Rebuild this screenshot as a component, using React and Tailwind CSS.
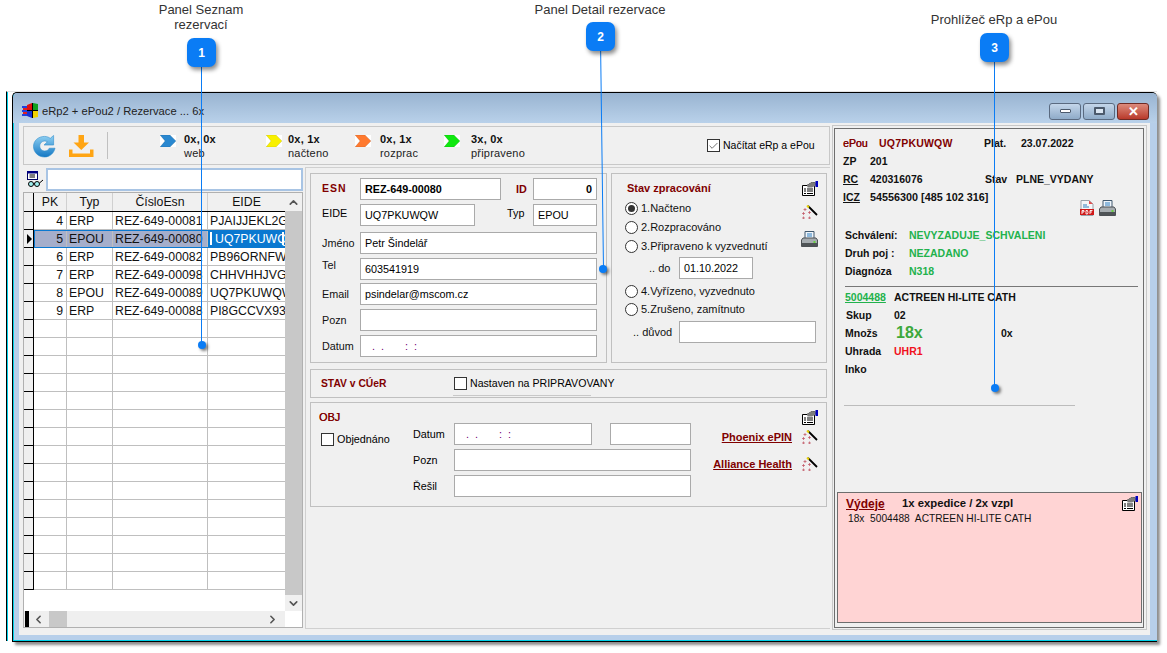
import React from 'react';
import { Check, ChevronUp, ChevronDown, ChevronLeft, ChevronRight } from 'lucide-react';

const rows = [
  { pk: 4, typ: 'ERP', esn: 'REZ-649-00081', eide: 'PJAIJJEKL2G' },
  { pk: 5, typ: 'EPOU', esn: 'REZ-649-00080', eide: 'UQ7PKUWQW', selected: true },
  { pk: 6, typ: 'ERP', esn: 'REZ-649-00082', eide: 'PB96ORNFW' },
  { pk: 7, typ: 'ERP', esn: 'REZ-649-00098', eide: 'CHHVHHJVGI' },
  { pk: 8, typ: 'EPOU', esn: 'REZ-649-00089', eide: 'UQ7PKUWQW' },
  { pk: 9, typ: 'ERP', esn: 'REZ-649-00088', eide: 'PI8GCCVX93I' },
];
const emptyRows = Array.from({ length: 15 }, (_, i) => i);

const Chevron = ({ color }) => (
  <svg width="16" height="12" viewBox="0 0 16 12" className="shrink-0 bg-white">
    <path d="M0 0H10L16 6L10 12H0L5 6Z" fill={color} stroke="#00000030" strokeWidth="0.5" />
  </svg>
);

const FormIcon = () => (
  <svg width="17" height="15" viewBox="0 0 17 15" className="shrink-0">
    <path d="M1.500 4.500H6L11 1.500H13.500V14.500H1.500Z" fill="#fff" stroke="#000" />
    <path d="M6 4L11 1L15 1.500V4.500L11 6.500H6.500Z" fill="#7c7c7c" />
    <rect x="14.500" y="0" width="2.500" height="6" fill="#0000c0" />
    <path d="M3 8H5M6 8H12M3 10H5M6 10H12M3 12.500H5M6 12.500H12" stroke="#000" strokeWidth="1" />
  </svg>
);

const WandIcon = () => (
  <svg width="17" height="14" viewBox="0 0 17 14" className="shrink-0">
    <path d="M7 1L16 10" stroke="#000" strokeWidth="1.800" />
    <path d="M6 0.500L8 2.500" stroke="#e8d000" strokeWidth="1.800" />
    <path d="M4 3V6M2.500 4.500H5.500M1 8.500H4M2.500 7V10M7 7.500H10M8.500 6V9M1 13H4M2.500 11.500V14M7 13H10M8.500 11.500V14" stroke="#c05060" strokeWidth="0.700" />
  </svg>
);

const PrinterIcon = () => (
  <svg width="17" height="16" viewBox="0 0 17 16" className="shrink-0">
    <path d="M4 .5H13V8H4Z" fill="#eef4fa" stroke="#40586e" />
    <path d="M6 3H11M6 5H11" stroke="#2f7fc0" />
    <path d="M2 7H15L16.500 9V15.500H.5V9Z" fill="#a6acb0" stroke="#4c5054" />
    <rect x="1" y="12" width="15" height="3" fill="#4e5356" />
    <rect x="12.500" y="10" width="2" height="2" fill="#66d040" />
  </svg>
);

const PdfIcon = () => (
  <svg width="14" height="16" viewBox="0 0 14 16" className="shrink-0">
    <path d="M1 .5H9L13 4V15.500H1Z" fill="#f4f6f8" stroke="#9aa2aa" />
    <path d="M9 .5L13 4H9Z" fill="#e05050" />
    <path d="M3 5H7M3 7H9" stroke="#3080c0" />
    <rect x="0" y="9" width="14" height="6" fill="#d01818" />
    <path d="M2 14V10.500H4V12H2M6 10.500V14H7.500L8 12.500L7.500 10.500ZM10 14V10.500H12.500M10 12H12" stroke="#fff" strokeWidth="0.900" fill="none" />
  </svg>
);

const RefreshIcon = () => (
  <svg width="23" height="24" viewBox="0 0 24 24" className="shrink-0">
    <defs>
      <linearGradient id="refreshFill" x1="0" y1="0" x2="0" y2="1">
        <stop offset="0" stopColor="#8fd0f2" />
        <stop offset="1" stopColor="#1478c4" />
      </linearGradient>
    </defs>
    <path d="M12 2C14.500 2 16.500 2.800 18 4L21.500 1V11H11.500L15 7.600C14 7 13.200 6.800 12.300 6.800C9.300 6.800 7 9 7 12C7 15 9.300 17.200 12.300 17.200C14.500 17.200 16.200 16 17 14.300H23C21.800 19.500 17.500 23.500 12 23.500C5.500 23.500 0.500 18.500 0.500 12.500C0.500 6.500 5.500 2 12 2Z" fill="url(#refreshFill)" stroke="#2c8ccc" strokeWidth="0.600" />
  </svg>
);

const DownloadIcon = () => (
  <svg width="25" height="22" viewBox="0 0 25 22" className="shrink-0">
    <path d="M9.500 0H15V7.500H20L12.250 15L4.500 7.500H9.500Z" fill="#ffa514" />
    <path d="M0 14.500H3.500V18.500H21V14.500H24.500V22H0Z" fill="#ffa514" />
  </svg>
);

const SearchIcon = () => (
  <svg width="17" height="17" viewBox="0 0 17 17" className="shrink-0">
    <rect x="0.500" y="0.500" width="10" height="8" fill="#fff" stroke="#000060" />
    <rect x="0" y="0" width="11" height="2.500" fill="#000080" />
    <path d="M2.500 4H8M2.500 6H8" stroke="#000" />
    <circle cx="4" cy="13" r="2.500" fill="#a0f0f0" stroke="#000" />
    <circle cx="10" cy="13" r="2.500" fill="#a0f0f0" stroke="#000" />
    <path d="M6.500 12.500H7.500M12.500 12L16 9" stroke="#000" />
  </svg>
);

const AppIcon = () => (
  <svg width="16" height="15" viewBox="0 0 16 15" className="shrink-0">
    <path d="M0 3H5V5H0ZM0 7H5V9H0ZM0 11H5V13H0Z" fill="#2040e0" />
    <path d="M1 5H5V7H1ZM1 9H5V11H1Z" fill="#e02020" />
    <path d="M5 2L10 0V7H5Z" fill="#e01010" />
    <path d="M11 0L16 1V7H11Z" fill="#10a020" />
    <path d="M5 8H10V15L5 13Z" fill="#1830d0" />
    <path d="M11 8H16V14L11 15Z" fill="#f0d000" />
    <path d="M10 0H11V15H10ZM5 7H16V8H5Z" fill="#000" />
  </svg>
);

const Box = ({ className = '', children }) => (
  <div className={`flex h-[22px] shrink-0 items-center border border-[#aaaaaa] bg-white pl-[4px] text-[10.800px] text-black ${className}`}>
    {children}
  </div>
);

const DateMask = () => (
  <span className="pl-[7px] text-[#700070]">.&nbsp;&nbsp;.&nbsp;&nbsp;&nbsp;&nbsp;&nbsp;&nbsp;&nbsp;:&nbsp;&nbsp;:</span>
);

const CheckBox = ({ checked }) => (
  <span className="flex h-[13px] w-[13px] shrink-0 items-center justify-center border border-[#333] bg-white">
    {checked && <Check size={12} strokeWidth={1.5} color="#333" />}
  </span>
);

const Radio = ({ checked, label }) => (
  <div className="flex h-[18px] items-center">
    <span className="flex h-[13px] w-[13px] shrink-0 items-center justify-center rounded-full border border-[#333] bg-white">
      {checked && <span className="h-[7px] w-[7px] rounded-full bg-[#333]" />}
    </span>
    <span className="ml-[3px] whitespace-nowrap">{label}</span>
  </div>
);

const FormRow = ({ label, value, mask, className = '', labelClass = '' }) => (
  <div className={`flex items-center ${className}`}>
    <span className={`w-[38px] shrink-0 text-[#111] ${labelClass}`}>{label}</span>
    <Box className="w-[237px]">{mask ? <DateMask /> : value}</Box>
  </div>
);

const StatusItem = ({ color, top, bottom, className = '', gap = 'gap-[8px]' }) => (
  <div className={`flex shrink-0 items-start ${gap} ${className}`}>
    <div className="pt-[3px]">
      <Chevron color={color} />
    </div>
    <div className="flex flex-col text-[11px] leading-[14px] tracking-[0.2px]">
      <b className="text-[#111]">{top}</b>
      <span className="text-[#222]">{bottom}</span>
    </div>
  </div>
);

const Toolbar = () => (
  <div className="flex h-[39px] items-center border border-[#c8c8c8] pl-[9px]">
    <RefreshIcon />
    <div className="ml-[13px]">
      <DownloadIcon />
    </div>
    <div className="ml-[13px] h-[27px] w-px bg-[#c0c0c0]" />
    <StatusItem color="#2a88d0" top="0x, 0x" bottom="web" className="ml-[52px] w-[106px]" />
    <StatusItem color="#f8f000" top="0x, 1x" bottom="načteno" className="w-[89px]" gap="gap-[6px]" />
    <StatusItem color="#ff7a30" top="0x, 1x" bottom="rozprac" className="w-[89px]" gap="gap-[9px]" />
    <StatusItem color="#10e810" top="3x, 0x" bottom="připraveno" className="w-[263px]" gap="gap-[11px]" />
    <div className="flex items-center gap-[3px] text-[10.500px]">
      <CheckBox checked />
      <span className="whitespace-nowrap">Načítat eRp a ePou</span>
    </div>
  </div>
);

const GridRow = ({ pk, typ, esn, eide, selected }) => (
  <div className="flex h-[18px] w-[261px] shrink-0">
    <div className="flex w-[10px] shrink-0 items-center border-r border-b border-black bg-[#efefef]">
      {selected && <span className="ml-[3px] h-0 w-0 border-y-[5px] border-l-[5px] border-y-transparent border-l-black" />}
    </div>
    <div className={`flex min-w-0 flex-1 border-b border-[#bfbfbf] ${selected ? 'outline outline-1 -outline-offset-1 outline-[#0a78d0]' : ''}`}>
      <div className={`w-[33px] shrink-0 overflow-hidden border-r border-[#bfbfbf] pr-[3px] text-right leading-[19px] ${selected ? 'bg-[#a5aecb]' : ''}`}>{pk}</div>
      <div className={`w-[46px] shrink-0 overflow-hidden border-r border-[#bfbfbf] pl-[2px] leading-[19px] ${selected ? 'bg-[#a5aecb]' : ''}`}>{typ}</div>
      <div className={`w-[95px] shrink-0 overflow-hidden border-r border-[#bfbfbf] pl-[2px] leading-[19px] whitespace-nowrap ${selected ? 'bg-[#a5aecb]' : ''}`}>{esn}</div>
      <div className={`relative min-w-0 flex-1 overflow-hidden pl-[2px] leading-[19px] whitespace-nowrap ${selected ? 'bg-[#0a78d0] pl-[7px] text-white' : ''}`}>
        {selected && <span className="absolute top-[2px] left-[2px] h-[13px] w-[2px] bg-white" />}
        {eide}
        {selected && <span className="absolute top-[2px] right-[1px] h-[13px] w-[2px] bg-white" />}
      </div>
    </div>
  </div>
);

const Grid = () => (
  <div className="flex h-[436px] flex-col overflow-hidden border border-[#b0b0b0] bg-white text-[12.300px] text-[#111]">
    <div className="flex min-h-0 flex-1">
      <div className="flex w-[261px] shrink-0 flex-col overflow-hidden">
        <div className="flex h-[19px] w-[261px] shrink-0 border-b border-black bg-[#f0f0f0] text-center leading-[19px]">
          <div className="w-[10px] shrink-0 border-r border-black" />
          <div className="w-[33px] shrink-0 border-r border-[#d0d0d0]">PK</div>
          <div className="w-[46px] shrink-0 border-r border-[#d0d0d0]">Typ</div>
          <div className="w-[95px] shrink-0 border-r border-[#d0d0d0]">ČísloEsn</div>
          <div className="flex-1">EIDE</div>
        </div>
        {rows.map((r) => <GridRow key={r.pk} {...r} />)}
        {emptyRows.map((i) => <GridRow key={i} />)}
      </div>
      <div className="flex w-[17px] shrink-0 flex-col bg-[#f0f0f0]">
        <div className="flex h-[18px] items-center justify-center">
          <ChevronUp size={13} strokeWidth={3} color="#555" />
        </div>
        <div className="flex-1 bg-[#c8c8c8]" />
        <div className="flex h-[16px] items-center justify-center">
          <ChevronDown size={13} strokeWidth={3} color="#555" />
        </div>
      </div>
    </div>
    <div className="flex h-[16px] w-[261px] shrink-0 items-center bg-[#efefef] pl-[1px]">
      <span className="h-full w-[4px] bg-black" />
      <ChevronLeft size={13} strokeWidth={3} color="#555" className="ml-[3px]" />
      <span className="ml-[4px] h-full w-[18px] bg-[#c8c8c8]" />
      <span className="flex-1" />
      <ChevronRight size={13} strokeWidth={3} color="#555" className="mr-[6px]" />
    </div>
  </div>
);

const DetailPanel = () => (
  <div className="flex h-[190px] w-[297px] shrink-0 flex-col border border-[#c0c0c0] pt-[4px] pl-[11px] text-[10.800px]">
    <div className="flex items-center">
      <b className="w-[38px] text-[10.500px] tracking-[1px] text-[#800000]">ESN</b>
      <Box className="w-[141px] font-bold">REZ-649-00080</Box>
      <b className="ml-[15px] w-[17px] text-[#800000]">ID</b>
      <Box className="w-[64px] justify-end pr-[4px] font-bold">0</Box>
    </div>
    <div className="mt-[4px] flex items-center">
      <span className="mb-[3px] w-[38px]">EIDE</span>
      <Box className="w-[115px]">UQ7PKUWQW</Box>
      <span className="mb-[3px] ml-[32px] w-[26px]">Typ</span>
      <Box className="w-[64px]">EPOU</Box>
    </div>
    <FormRow label="Jméno" value="Petr Šindelář" className="mt-[6px]" />
    <FormRow label="Tel" value="603541919" className="mt-[3px]" labelClass="mb-[7px]" />
    <FormRow label="Email" value="psindelar@mscom.cz" className="mt-[3px]" />
    <FormRow label="Pozn" className="mt-[4px]" />
    <FormRow label="Datum" mask className="mt-[4px]" />
  </div>
);

const StatePanel = () => (
  <div className="flex h-[190px] w-[216px] shrink-0 border border-[#c0c0c0] pl-[13px] text-[11px] text-[#111]">
    <div className="w-[174px] shrink-0 pt-[7px]">
      <b className="block pl-[2px] leading-[14px] text-[#800000]">Stav zpracování</b>
      <div className="mt-[4px] flex flex-col gap-px">
        <Radio checked label="1.Načteno" />
        <Radio label="2.Rozpracováno" />
        <Radio label="3.Připraveno k vyzvednutí" />
      </div>
      <div className="mt-[2px] flex items-center">
        <span className="w-[54px] shrink-0 pl-[24px]">.. do</span>
        <Box className="w-[74px]">01.10.2022</Box>
      </div>
      <div className="mt-[3px] flex flex-col">
        <Radio label="4.Vyřízeno, vyzvednuto" />
        <Radio label="5.Zrušeno, zamítnuto" />
      </div>
      <div className="mt-[3px] flex items-center">
        <span className="w-[54px] shrink-0 pl-[8px] whitespace-nowrap">.. důvod</span>
        <Box className="w-[137px]" />
      </div>
    </div>
    <div className="flex flex-col gap-[9px] pt-[7px] pl-[2px]">
      <FormIcon />
      <WandIcon />
      <div className="mt-[3px]">
        <PrinterIcon />
      </div>
    </div>
  </div>
);

const CuerPanel = () => (
  <div className="mt-[6px] flex h-[29px] items-center border border-[#c0c0c0] pl-[10px] text-[10.600px]">
    <b className="w-[133px] text-[10.300px] text-[#800000]">STAV v CÚeR</b>
    <CheckBox />
    <span className="ml-[3px] whitespace-nowrap">Nastaven na PRIPRAVOVANY</span>
  </div>
);

const ObjPanel = () => (
  <div className="relative mt-[4px] flex h-[105px] border border-[#c0c0c0] pl-[8px] text-[10.800px]">
    <span className="absolute top-[-8px] left-[142px] h-px w-[138px] bg-[#c8c8c8]" />
    <div className="w-[94px] shrink-0 pt-[7px]">
      <b className="block font-normal leading-[14px] text-[#800000] [text-shadow:0.3px_0_0_#800000]">OBJ</b>
      <div className="mt-[7px] ml-[2px] flex items-center gap-[3px]">
        <CheckBox />
        <span>Objednáno</span>
      </div>
    </div>
    <div className="w-[278px] shrink-0 pt-[20px]">
      <div className="flex items-center">
        <span className="w-[41px]">Datum</span>
        <Box className="w-[138px]"><DateMask /></Box>
        <Box className="ml-[18px] w-[81px]" />
      </div>
      <div className="mt-[4px] flex items-center">
        <span className="w-[41px]">Pozn</span>
        <Box className="w-[237px]" />
      </div>
      <div className="mt-[4px] flex items-center">
        <span className="w-[41px]">Řešil</span>
        <Box className="w-[237px]" />
      </div>
    </div>
    <div className="flex flex-1 flex-col items-end pt-[7px] pr-[8px] text-[11px]">
      <FormIcon />
      <div className="mt-[4px] flex items-center gap-[9px] font-bold text-[#800000] underline">
        Phoenix ePIN <WandIcon />
      </div>
      <div className="mt-[10px] flex items-center gap-[9px] font-bold text-[#800000] underline">
        Alliance Health <WandIcon />
      </div>
    </div>
  </div>
);

const InfoRow = ({ label, value, className = '', labelClass = 'w-[27px]', valueClass = '' }) => (
  <div className={`flex h-[18px] items-center ${className}`}>
    <span className={`shrink-0 ${labelClass}`}>{label}</span>
    <span className={`whitespace-nowrap ${valueClass}`}>{value}</span>
  </div>
);

const ViewerPanel = () => (
  <div className="flex h-full flex-col border border-[#6e6e6e] pl-[8px] text-[10.500px] leading-none font-bold text-[#111]">
    <div className="mt-[5px] flex h-[18px] items-center">
      <span className="w-[36px] font-normal text-[#800000] [text-shadow:0.3px_0_0_#800000]">ePou</span>
      <span className="w-[105px] tracking-[0.2px] text-[#800000]">UQ7PKUWQW</span>
      <span className="w-[37px]">Plat.</span>
      <span>23.07.2022</span>
    </div>
    <InfoRow label="ZP" value="201" />
    <div className="flex h-[18px] items-center">
      <span className="w-[27px] underline">RC</span>
      <span className="w-[115px]">420316076</span>
      <span className="w-[31px]">Stav</span>
      <span>PLNE_VYDANY</span>
    </div>
    <div className="flex h-[18px] items-center">
      <span className="w-[27px] underline">ICZ</span>
      <span className="text-[10.800px]">54556300 [485 102 316]</span>
    </div>
    <div className="mt-[-6px] flex h-[16px] items-center justify-end gap-[5px] pr-[27px]">
      <PdfIcon />
      <PrinterIcon />
    </div>
    <div className="mt-[10px] pl-[2px]">
      <InfoRow label="Schválení:" value="NEVYZADUJE_SCHVALENI" labelClass="w-[64px]" valueClass="text-[#22b24c]" />
      <InfoRow label="Druh poj :" value="NEZADANO" labelClass="w-[64px]" valueClass="text-[#22b24c]" />
      <InfoRow label="Diagnóza" value="N318" labelClass="w-[64px]" valueClass="text-[#22b24c]" />
    </div>
    <div className="mt-[6px] mr-[5px] ml-[2px] h-px bg-[#777]" />
    <div className="mt-px flex h-[18px] items-center pl-[2px]">
      <span className="w-[49px] text-[#22b24c] underline">5004488</span>
      <span>ACTREEN HI-LITE CATH</span>
    </div>
    <div className="pl-[2px]">
      <InfoRow label="Skup" value="02" labelClass="w-[49px] pl-px" />
      <div className="flex h-[18px] items-center">
        <span className="w-[51px]">Množs</span>
        <span className="w-[105px] text-[16px] text-[#3ca83c]">18x</span>
        <span>0x</span>
      </div>
      <InfoRow label="Uhrada" value="UHR1" labelClass="w-[49px]" valueClass="text-[#f01020]" />
      <InfoRow label="Inko" labelClass="w-[49px]" />
    </div>
    <div className="mt-[27px] ml-px h-px w-[231px] bg-[#bcbcbc]" />
    <div className="flex-1" />
    <div className="mb-[4px] ml-[-6px] flex h-[131px] w-[305px] flex-col border border-[#6e6e6e] bg-[#ffd4d4] pt-[3px] pr-[3px] pl-[8px] text-[11px]">
      <div className="flex items-center">
        <span className="w-[56px] text-[12px] text-[#800000] underline">Výdeje</span>
        <span className="text-[11.300px]">1x expedice / 2x vzpl</span>
        <span className="flex-1" />
        <FormIcon />
      </div>
      <div className="mt-[3px] pl-[2px] text-[10.200px] font-normal whitespace-pre">18x  5004488  ACTREEN HI-LITE CATH</div>
    </div>
  </div>
);

const Badge = ({ n, className }) => (
  <div className={`absolute flex h-[29px] w-[29px] items-center justify-center rounded-[7px] bg-[#0a7cf5] text-[12px] font-bold text-white shadow-[2px_3px_4px_rgba(0,0,0,0.45)] ${className}`}>
    {n}
  </div>
);

const Dot = ({ className }) => (
  <span className={`absolute h-[8px] w-[8px] rounded-full bg-[#0a7cf5] shadow-[2px_2px_3px_rgba(0,0,0,0.5)] ${className}`} />
);

export default function App() {
  return (
    <div className="relative h-[653px] w-[1167px] overflow-hidden bg-white font-['Liberation_Sans',sans-serif]">
      <div className="mt-[89px] ml-[6px] h-[553px] w-[1151px] pt-[2px]">
        <div className="h-[550px] border-t border-l border-t-[#e4e4e4] border-l-black pl-[5px] shadow-[inset_1px_0_0_#00d0e8]">
          <div className="flex h-[550px] flex-col rounded-t-[5px] border-t border-b border-l border-black bg-[#b7cfea] shadow-[inset_1px_-1px_0_#00d0e8,3px_3px_3px_rgba(0,0,0,0.45)]">
            <div className="flex h-[30px] shrink-0 items-center justify-between rounded-t-[5px] bg-gradient-to-b from-[#99b4d1] to-[#b9d1ea] pt-[6px] pr-[8px] pl-[9px] text-[11.200px] text-[#222]">
              <div className="flex items-center gap-[4px]">
                <AppIcon />
                <span>eRp2 + ePou2 / Rezervace ... 6x</span>
              </div>
              <div className="flex items-center gap-[2px]">
                <div className="flex h-[17px] w-[32px] items-center justify-center rounded-[3px] border border-[#5a6a80] bg-gradient-to-b from-[#c4d6ea] to-[#8fabc8]">
                  <span className="h-[4px] w-[11px] rounded-[1px] border border-[#4c5a6c] bg-white" />
                </div>
                <div className="flex h-[17px] w-[32px] items-center justify-center rounded-[3px] border border-[#5a6a80] bg-gradient-to-b from-[#c4d6ea] to-[#8fabc8]">
                  <span className="h-[8px] w-[11px] rounded-[1px] border-2 border-[#4c5a6c] bg-[#dbe6f2]" />
                </div>
                <div className="flex h-[17px] w-[32px] items-center justify-center rounded-[3px] border border-[#6e2a24] bg-gradient-to-b from-[#dc8a7c] to-[#b8382a] text-[13px] leading-none font-bold text-white">
                  ✕
                </div>
              </div>
            </div>
            <div className="mr-[7px] mb-[6px] ml-[6px] flex min-h-0 flex-1 bg-[#f0f0f0] pt-[2px] pl-[4px]">
              <div className="flex w-[807px] shrink-0 flex-col pt-px">
                <Toolbar />
                <div className="mt-[2px] flex min-h-0 flex-1 gap-[2px]">
                  <div className="flex w-[280px] shrink-0 flex-col">
                    <div className="flex h-[25px] items-center gap-[2px] pl-[4px]">
                      <SearchIcon />
                      <div className="h-[23px] flex-1 border-2 border-[#a8c4e4] bg-white" />
                    </div>
                    <Grid />
                  </div>
                  <div className="flex h-[462px] flex-1 flex-col border border-r-0 border-[#d0d0d0] pt-[5px] pl-[4px]">
                    <div className="flex gap-[4px]">
                      <DetailPanel />
                      <StatePanel />
                    </div>
                    <div className="w-[517px]">
                      <CuerPanel />
                      <ObjPanel />
                    </div>
                  </div>
                </div>
              </div>
              <div className="ml-[2px] h-[505px] w-[315px] shrink-0 border border-[#c8c8c8] pt-[2px] pr-[2px] pb-px pl-px">
                <ViewerPanel />
              </div>
            </div>
          </div>
        </div>
      </div>

      {/* popisky nad screenshotem */}
      <div className="absolute top-[2px] left-[141px] w-[120px] text-center text-[13px] leading-[15px] text-[#333]">
        Panel Seznam<br />rezervací
      </div>
      <div className="absolute top-[2px] left-[500px] w-[200px] text-center text-[13px] leading-[15px] text-[#333]">
        Panel Detail rezervace
      </div>
      <div className="absolute top-[12px] left-[894px] w-[200px] text-center text-[13px] leading-[15px] text-[#333]">
        Prohlížeč eRp a ePou
      </div>
      <svg width="1167" height="653" viewBox="0 0 1167 653" className="pointer-events-none absolute top-0 left-0">
        <path d="M201.500 60V345M600.500 40L603.500 269M994.500 50V388" stroke="#0a7cf5" strokeWidth="1" fill="none" />
      </svg>
      <Badge n="1" className="top-[38px] left-[187px]" />
      <Badge n="2" className="top-[22px] left-[586px]" />
      <Badge n="3" className="top-[33px] left-[980px]" />
      <Dot className="top-[341px] left-[198px]" />
      <Dot className="top-[265px] left-[599px]" />
      <Dot className="top-[384px] left-[991px]" />
    </div>
  );
}
